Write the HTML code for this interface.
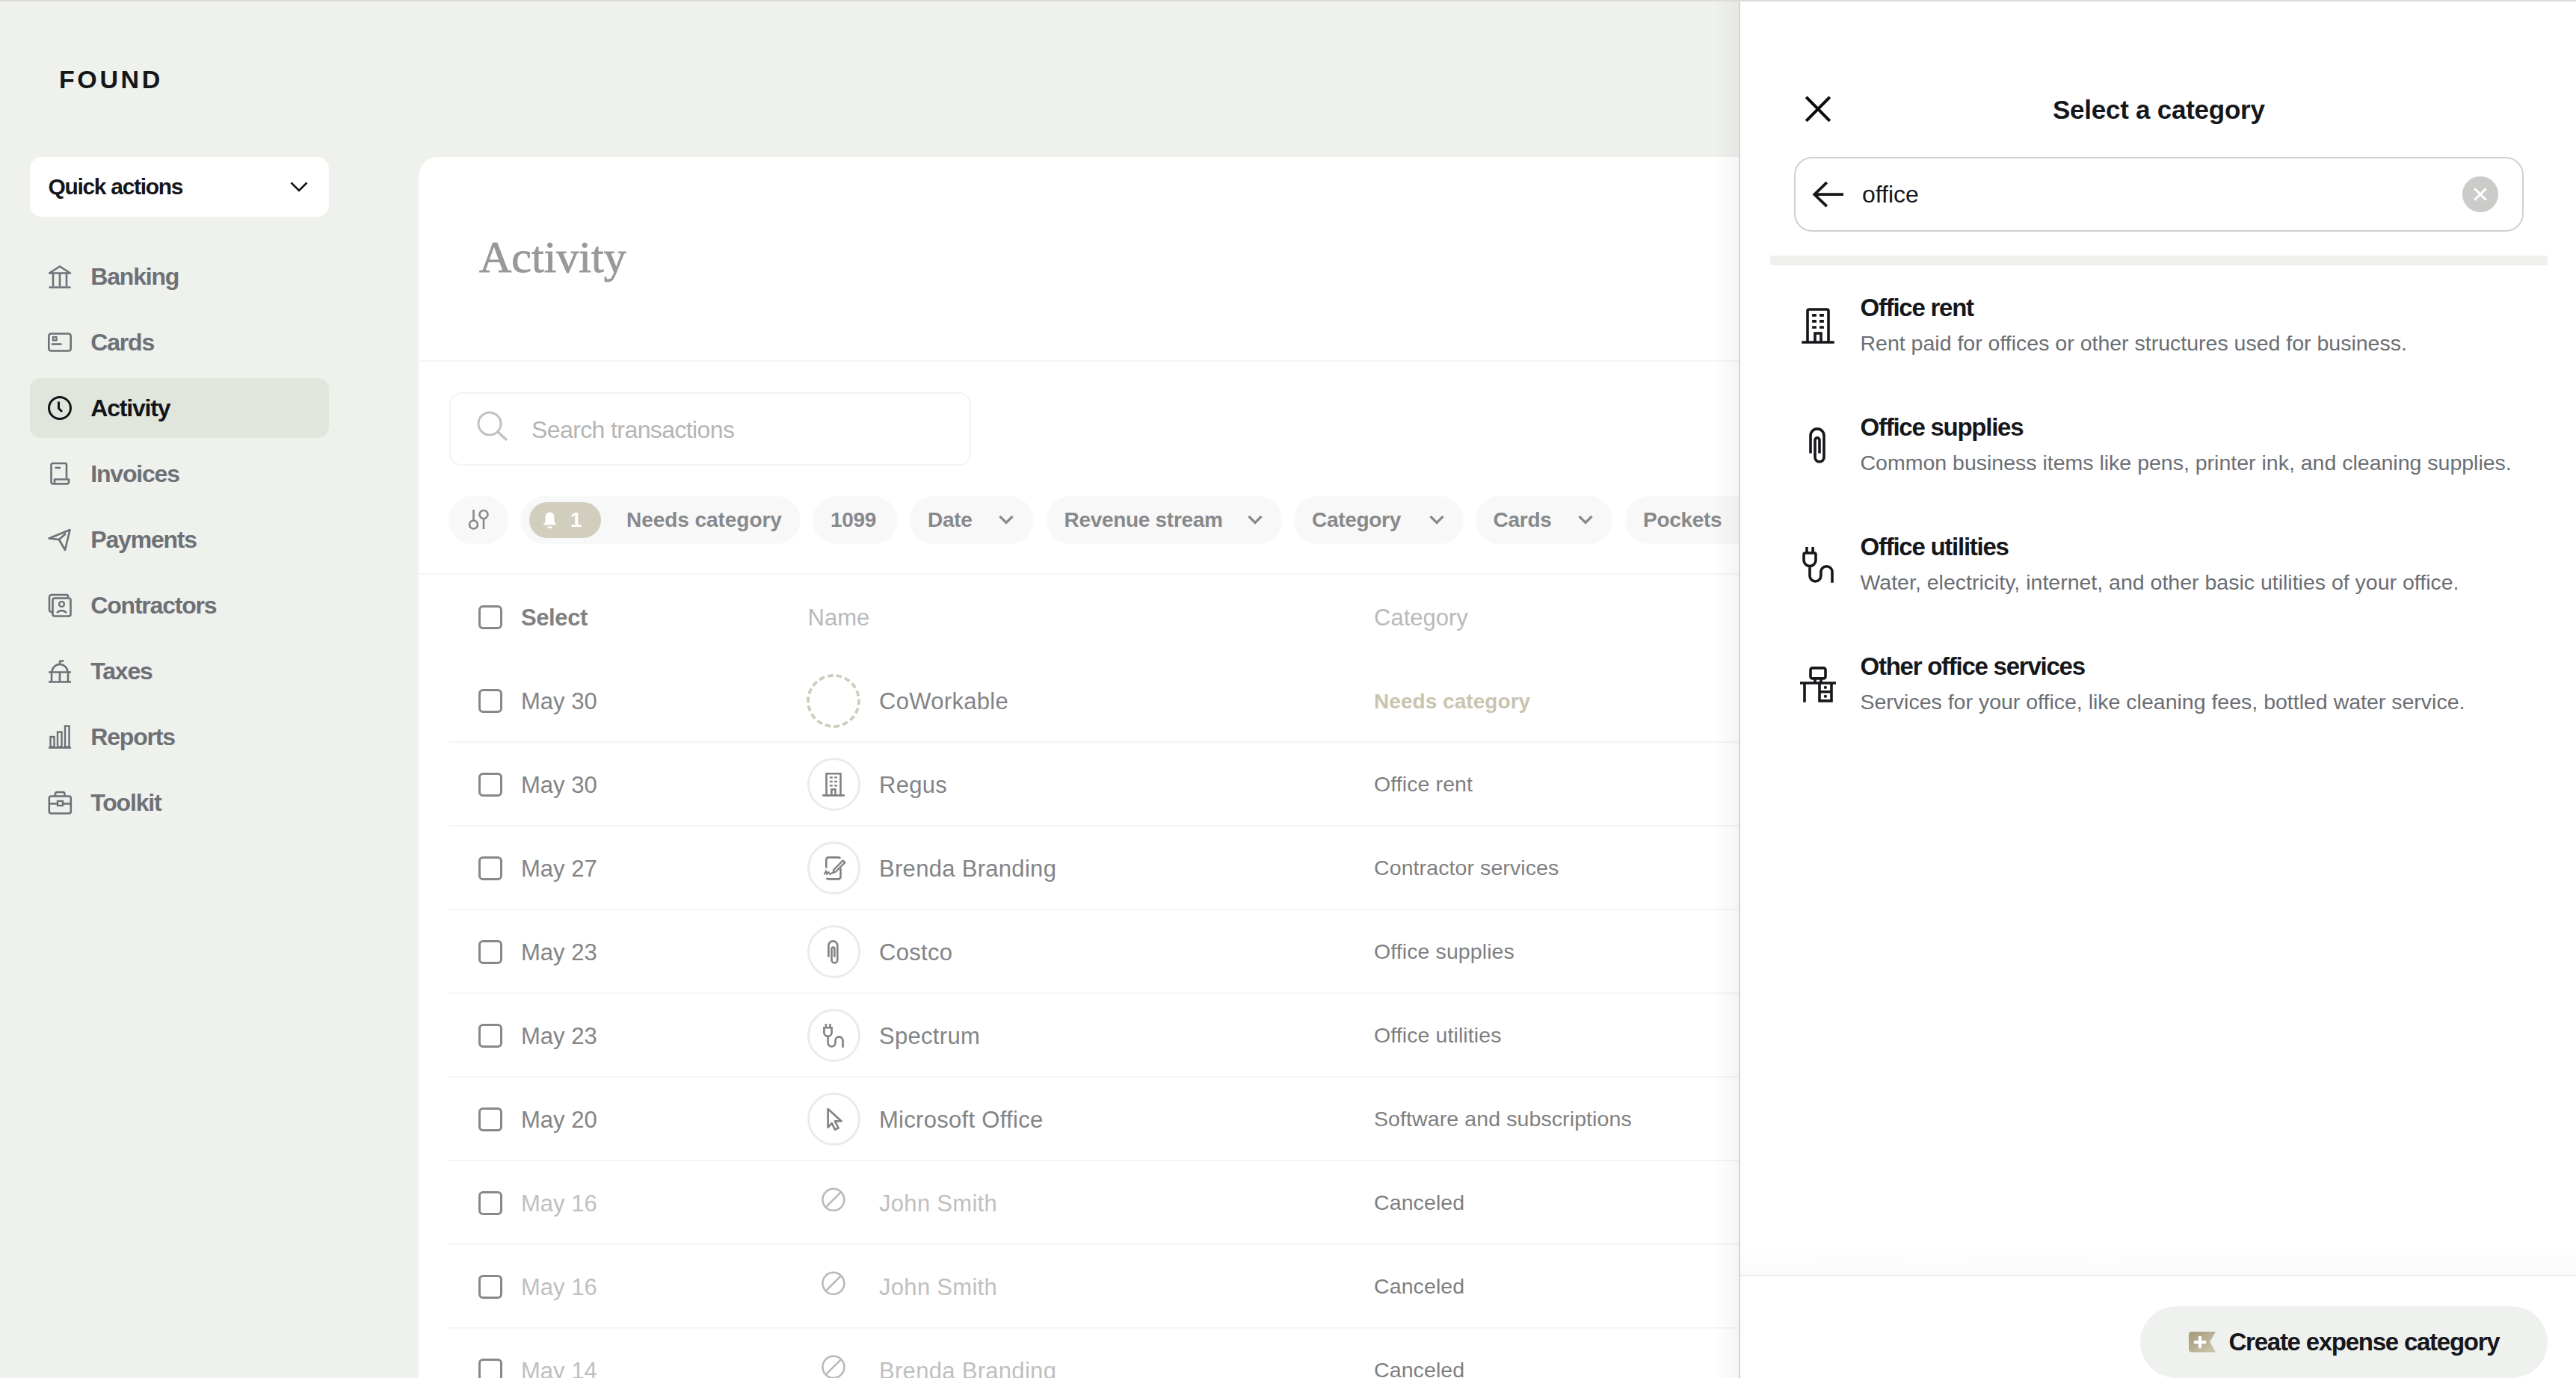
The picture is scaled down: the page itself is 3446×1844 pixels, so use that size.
<!DOCTYPE html>
<html>
<head>
<meta charset="utf-8">
<style>
html,body{margin:0;padding:0;}
body{width:3446px;height:1844px;overflow:hidden;position:relative;background:#eff1ed;font-family:"Liberation Sans",sans-serif;}
.a{position:absolute;}
.t{position:absolute;line-height:1;white-space:nowrap;}
svg{position:absolute;overflow:visible;}
</style>
</head>
<body>
<div class="a" style="left:0;top:0;width:3446px;height:2px;background:#dcdddb;z-index:50"></div>
<div class="t" style="left:79px;top:89.22px;font-size:34px;font-weight:700;letter-spacing:3.6px;color:#15161a;">FOUND</div>
<div class="a" style="left:40px;top:210px;width:400px;height:80px;background:#fff;border-radius:16px"></div>
<div class="t" style="left:64.4px;top:234.91px;font-size:30px;font-weight:700;letter-spacing:-1.3px;color:#15161a;">Quick actions</div>
<svg style="left:388px;top:243px" width="24" height="14" viewBox="0 0 24 14"><path d="M1.5 1.5 L12 12 L22.5 1.5" fill="none" stroke="#15161a" stroke-width="2.6"/></svg>
<svg style="left:64px;top:354px" width="32" height="32"><path d="M2 11.5 L16 2.5 L30 11.5 Z" fill="none" stroke="#6d7076" stroke-width="2.6" stroke-linejoin="round"/><path d="M1.5 30.5 H30.5 M7 12 V29 M16 12 V29 M25 12 V29" fill="none" stroke="#6d7076" stroke-width="2.6"/></svg>
<div class="t" style="left:121.3px;top:353.91px;font-size:32px;font-weight:700;letter-spacing:-1.2px;color:#6d7076;">Banking</div>
<svg style="left:64px;top:442px" width="32" height="32"><rect x="1.3" y="4.5" width="29.4" height="23" rx="3" fill="none" stroke="#6d7076" stroke-width="2.6"/><rect x="7" y="9" width="4.5" height="4.5" fill="none" stroke="#6d7076" stroke-width="2.2"/><path d="M5 18.5 H18.5" stroke="#6d7076" stroke-width="2.6"/></svg>
<div class="t" style="left:121.3px;top:441.91px;font-size:32px;font-weight:700;letter-spacing:-1.2px;color:#6d7076;">Cards</div>
<div class="a" style="left:40px;top:506px;width:400px;height:80px;background:#e1e6dd;border-radius:14px"></div>
<svg style="left:64px;top:530px" width="32" height="32"><circle cx="16" cy="16" r="14.5" fill="none" stroke="#131417" stroke-width="3"/><path d="M14.5 7.5 V16.5 L19 21" fill="none" stroke="#131417" stroke-width="3"/></svg>
<div class="t" style="left:121.3px;top:529.91px;font-size:32px;font-weight:700;letter-spacing:-1.2px;color:#131417;">Activity</div>
<svg style="left:64px;top:618px" width="32" height="32"><path d="M25 22 V4 a2 2 0 0 0 -2 -2 H6.5 a2 2 0 0 0 -2 2 V27 a2.5 2.5 0 0 0 2.5 2.5 H25.5 a2.5 2.5 0 0 0 2.5 -2.5 V23.5 H9 V29.5" fill="none" stroke="#6d7076" stroke-width="2.6" stroke-linejoin="round"/><path d="M9.5 8 H17" stroke="#6d7076" stroke-width="2.6"/></svg>
<div class="t" style="left:121.3px;top:617.91px;font-size:32px;font-weight:700;letter-spacing:-1.2px;color:#6d7076;">Invoices</div>
<svg style="left:64px;top:706px" width="32" height="32"><path d="M1.5 14.5 L29.5 3 L23 30 L15 16 Z M15 16 L24 8" fill="none" stroke="#6d7076" stroke-width="2.6" stroke-linejoin="round"/></svg>
<div class="t" style="left:121.3px;top:705.91px;font-size:32px;font-weight:700;letter-spacing:-1.2px;color:#6d7076;">Payments</div>
<svg style="left:64px;top:794px" width="32" height="32"><path d="M27 5.5 V4 a2 2 0 0 0 -2 -2 H5 a3 3 0 0 0 -3 3 V22 a3 3 0 0 0 3 3 H6" fill="none" stroke="#6d7076" stroke-width="2.6"/><rect x="6.5" y="6.5" width="24" height="24" rx="2.5" fill="none" stroke="#6d7076" stroke-width="2.6"/><circle cx="18.5" cy="14.5" r="3.4" fill="none" stroke="#6d7076" stroke-width="2.4"/><path d="M12 26 Q18.5 20 25 26" fill="none" stroke="#6d7076" stroke-width="2.4"/></svg>
<div class="t" style="left:121.3px;top:793.91px;font-size:32px;font-weight:700;letter-spacing:-1.2px;color:#6d7076;">Contractors</div>
<svg style="left:64px;top:882px" width="32" height="32"><path d="M1 17.5 H31 M1 30.5 H31 M5 17.5 V30 M16 17.5 V30 M27 17.5 V30 M5.5 17.5 A10.5 10.5 0 0 1 26.5 17.5 M16 2 V7 M16 2.5 H21.5" fill="none" stroke="#6d7076" stroke-width="2.6"/></svg>
<div class="t" style="left:121.3px;top:881.91px;font-size:32px;font-weight:700;letter-spacing:-1.2px;color:#6d7076;">Taxes</div>
<svg style="left:64px;top:970px" width="32" height="32"><path d="M1 30.5 H31" stroke="#6d7076" stroke-width="2.6"/><rect x="3.5" y="16" width="5" height="13.5" fill="none" stroke="#6d7076" stroke-width="2.4"/><rect x="13" y="9.5" width="5.5" height="20" fill="none" stroke="#6d7076" stroke-width="2.4"/><rect x="23" y="1.5" width="5.5" height="28" fill="none" stroke="#6d7076" stroke-width="2.4"/></svg>
<div class="t" style="left:121.3px;top:969.91px;font-size:32px;font-weight:700;letter-spacing:-1.2px;color:#6d7076;">Reports</div>
<svg style="left:64px;top:1058px" width="32" height="32"><rect x="1.8" y="7.5" width="29" height="23" rx="2.5" fill="none" stroke="#6d7076" stroke-width="2.6"/><path d="M10 7 V4.5 a2.5 2.5 0 0 1 2.5 -2.5 H20 a2.5 2.5 0 0 1 2.5 2.5 V7 M2 17.5 H13 M20 17.5 H31" fill="none" stroke="#6d7076" stroke-width="2.6"/><rect x="13" y="14" width="7" height="6" fill="none" stroke="#6d7076" stroke-width="2.4"/></svg>
<div class="t" style="left:121.3px;top:1057.91px;font-size:32px;font-weight:700;letter-spacing:-1.2px;color:#6d7076;">Toolkit</div>
<div class="a" style="left:560px;top:210px;width:1800px;height:1700px;background:#fff;border-top-left-radius:26px"></div>
<div class="t" style="left:641px;top:314.25px;font-size:60px;font-family:'Liberation Serif',serif;color:#98999b;-webkit-text-stroke:0.9px #98999b">Activity</div>
<div class="a" style="left:560px;top:482px;width:1800px;height:2px;background:#f5f5f5"></div>
<div class="a" style="left:601px;top:525px;width:698px;height:98px;border:2px solid #f3f3f3;border-radius:16px;box-sizing:border-box"></div>
<svg style="left:638px;top:550px" width="42" height="38"><circle cx="17" cy="17" r="15" fill="none" stroke="#c2c2c2" stroke-width="3"/><path d="M28 28 L40 39" stroke="#c2c2c2" stroke-width="3.4"/></svg>
<div class="t" style="left:711px;top:558.91px;font-size:32px;letter-spacing:-0.6px;color:#b5b5b5;">Search transactions</div>
<div class="a" style="left:600px;top:664px;width:80px;height:64px;background:#f8f8f8;border-radius:32px"></div>
<svg style="left:626px;top:682px" width="28" height="27"><path d="M7.5 0 V14" stroke="#88898b" stroke-width="2.6"/><circle cx="7.5" cy="20" r="5.5" fill="none" stroke="#88898b" stroke-width="2.6"/><circle cx="21" cy="6.5" r="5.5" fill="none" stroke="#88898b" stroke-width="2.6"/><path d="M21 12 V26" stroke="#88898b" stroke-width="2.6"/></svg>
<div class="a" style="left:696px;top:664px;width:375px;height:64px;background:#f8f8f8;border-radius:32px"></div>
<div class="a" style="left:708px;top:672px;width:96px;height:48px;background:#d1cebe;border-radius:24px"></div>
<svg style="left:726px;top:685px" width="19" height="23"><path d="M9.5 0.5 C4 0.5 3.5 5 3.5 9 V13.5 L0.5 17.5 H18.5 L15.5 13.5 V9 C15.5 5 15 0.5 9.5 0.5 Z" fill="#fff"/><rect x="6.5" y="19.5" width="6" height="2.5" rx="1" fill="#fff"/></svg>
<div class="t" style="left:762.7px;top:681.60px;font-size:28px;font-weight:700;color:#fff;">1</div>
<div class="t" style="left:838px;top:681.60px;font-size:28px;font-weight:700;letter-spacing:-0.05px;color:#88898b;">Needs category</div>
<div class="a" style="left:1087px;top:664px;width:113px;height:64px;background:#f8f8f8;border-radius:32px"></div>
<div class="t" style="left:1111px;top:681.60px;font-size:28px;font-weight:700;letter-spacing:-0.3px;color:#88898b;">1099</div>
<div class="a" style="left:1217px;top:664px;width:165px;height:64px;background:#f8f8f8;border-radius:32px"></div>
<div class="t" style="left:1241px;top:681.60px;font-size:28px;font-weight:700;letter-spacing:-0.3px;color:#88898b;">Date</div>
<svg style="left:1336px;top:689px" width="20" height="13"><path d="M1.5 1.8 L10 10.3 L18.5 1.8" fill="none" stroke="#88898b" stroke-width="3.3"/></svg>
<div class="a" style="left:1399.5px;top:664px;width:315.5px;height:64px;background:#f8f8f8;border-radius:32px"></div>
<div class="t" style="left:1423.5px;top:681.60px;font-size:28px;font-weight:700;letter-spacing:-0.3px;color:#88898b;">Revenue stream</div>
<svg style="left:1669px;top:689px" width="20" height="13"><path d="M1.5 1.8 L10 10.3 L18.5 1.8" fill="none" stroke="#88898b" stroke-width="3.3"/></svg>
<div class="a" style="left:1731px;top:664px;width:226.5px;height:64px;background:#f8f8f8;border-radius:32px"></div>
<div class="t" style="left:1755px;top:681.60px;font-size:28px;font-weight:700;letter-spacing:-0.3px;color:#88898b;">Category</div>
<svg style="left:1911.5px;top:689px" width="20" height="13"><path d="M1.5 1.8 L10 10.3 L18.5 1.8" fill="none" stroke="#88898b" stroke-width="3.3"/></svg>
<div class="a" style="left:1973.6px;top:664px;width:183.4000000000001px;height:64px;background:#f8f8f8;border-radius:32px"></div>
<div class="t" style="left:1997.6px;top:681.60px;font-size:28px;font-weight:700;letter-spacing:-0.3px;color:#88898b;">Cards</div>
<svg style="left:2111px;top:689px" width="20" height="13"><path d="M1.5 1.8 L10 10.3 L18.5 1.8" fill="none" stroke="#88898b" stroke-width="3.3"/></svg>
<div class="a" style="left:2174px;top:664px;width:226px;height:64px;background:#f8f8f8;border-radius:32px"></div>
<div class="t" style="left:2198px;top:681.60px;font-size:28px;font-weight:700;letter-spacing:-0.3px;color:#88898b;">Pockets</div>
<div class="a" style="left:560px;top:767px;width:1800px;height:2px;background:#f5f5f5"></div>
<div class="a" style="left:640px;top:810px;width:32px;height:32px;border:3.8px solid #87888a;border-radius:6px;box-sizing:border-box"></div>
<div class="t" style="left:697px;top:811.36px;font-size:31px;font-weight:700;letter-spacing:-0.4px;color:#7f8082;">Select</div>
<div class="t" style="left:1080.6px;top:811.36px;font-size:31px;color:#b9babb;">Name</div>
<div class="t" style="left:1838px;top:811.36px;font-size:31px;color:#b9babb;">Category</div>
<div class="a" style="left:640px;top:921.7px;width:32px;height:32px;border:3.8px solid #87888a;border-radius:6px;box-sizing:border-box"></div>
<div class="t" style="left:697px;top:923.16px;font-size:31px;color:#838486;">May 30</div>
<svg style="left:1079px;top:901.7px" width="72" height="72"><circle cx="36" cy="36" r="34" fill="none" stroke="#cfccbb" stroke-width="3.8" stroke-dasharray="7.6 4.27" transform="rotate(-84 36 36)"/></svg>

<div class="t" style="left:1176px;top:923.16px;font-size:31px;letter-spacing:0.3px;color:#838486;">CoWorkable</div>
<div class="t" style="left:1838px;top:924.70px;font-size:28px;font-weight:700;letter-spacing:0.05px;color:#c8c4af;">Needs category</div>
<div class="a" style="left:600px;top:992px;width:1760px;height:2px;background:#f5f5f5"></div>
<div class="a" style="left:640px;top:1033.7px;width:32px;height:32px;border:3.8px solid #87888a;border-radius:6px;box-sizing:border-box"></div>
<div class="t" style="left:697px;top:1035.16px;font-size:31px;color:#838486;">May 30</div>
<div class="a" style="left:1079.5px;top:1014.2px;width:71px;height:71px;border:3px solid #e9ece9;border-radius:50%;box-sizing:border-box"></div>
<svg style="left:1075px;top:1009.7px" width="80" height="80"><path d="M25.1 54.4 H54.9 M30.5 54 V25.3 H49.5 V54 M37.4 54 V46.4 H42.5 V54" fill="none" stroke="#808183" stroke-width="2.6"/><path d="M34.8 30.4 H38.8 M41.2 30.4 H45 M34.8 35.9 H38.8 M41.2 35.9 H45 M34.8 41.3 H38.8 M41.2 41.3 H45" stroke="#808183" stroke-width="2.4"/></svg>
<div class="t" style="left:1176px;top:1035.16px;font-size:31px;letter-spacing:0.3px;color:#838486;">Regus</div>
<div class="t" style="left:1838px;top:1034.67px;font-size:28.5px;letter-spacing:0.1px;color:#7e7f81;">Office rent</div>
<div class="a" style="left:600px;top:1104px;width:1760px;height:2px;background:#f5f5f5"></div>
<div class="a" style="left:640px;top:1145.7px;width:32px;height:32px;border:3.8px solid #87888a;border-radius:6px;box-sizing:border-box"></div>
<div class="t" style="left:697px;top:1147.16px;font-size:31px;color:#838486;">May 27</div>
<div class="a" style="left:1079.5px;top:1126.2px;width:71px;height:71px;border:3px solid #e9ece9;border-radius:50%;box-sizing:border-box"></div>
<svg style="left:1075px;top:1121.7px" width="80" height="80"><path d="M30.3 39.5 V28.4 a3 3 0 0 1 3 -3 H46.5 a3 3 0 0 1 2.6 1.5 M49.5 39.5 V51.4 a3 3 0 0 1 -3 3 H33.3 a3 3 0 0 1 -2.6 -1.6" fill="none" stroke="#808183" stroke-width="2.6"/><path d="M39.6 46 L40.3 41.8 L52.6 29.5 L55.3 32.2 L43 44.5 Z" fill="none" stroke="#808183" stroke-width="2.4" stroke-linejoin="round"/><path d="M27.6 48.5 L29.8 43.8 L31.2 47.6 L33.2 45 L35.4 48 L37.6 46.2 L40 46" fill="none" stroke="#808183" stroke-width="2"/></svg>
<div class="t" style="left:1176px;top:1147.16px;font-size:31px;letter-spacing:0.3px;color:#838486;">Brenda Branding</div>
<div class="t" style="left:1838px;top:1146.67px;font-size:28.5px;letter-spacing:0.1px;color:#7e7f81;">Contractor services</div>
<div class="a" style="left:600px;top:1216px;width:1760px;height:2px;background:#f5f5f5"></div>
<div class="a" style="left:640px;top:1257.7px;width:32px;height:32px;border:3.8px solid #87888a;border-radius:6px;box-sizing:border-box"></div>
<div class="t" style="left:697px;top:1259.16px;font-size:31px;color:#838486;">May 23</div>
<div class="a" style="left:1079.5px;top:1238.2px;width:71px;height:71px;border:3px solid #e9ece9;border-radius:50%;box-sizing:border-box"></div>
<svg style="left:1075px;top:1233.7px" width="80" height="80"><path d="M33.4 46.7 V31.35 A5.95 5.95 0 0 1 45.3 31.35 V50.5 A3.9 3.9 0 0 1 37.5 50.5 V35.45 A1.95 1.95 0 0 1 41.4 35.45 V46.7" fill="none" stroke="#808183" stroke-width="2.6"/></svg>
<div class="t" style="left:1176px;top:1259.16px;font-size:31px;letter-spacing:0.3px;color:#838486;">Costco</div>
<div class="t" style="left:1838px;top:1258.67px;font-size:28.5px;letter-spacing:0.1px;color:#7e7f81;">Office supplies</div>
<div class="a" style="left:600px;top:1328px;width:1760px;height:2px;background:#f5f5f5"></div>
<div class="a" style="left:640px;top:1369.7px;width:32px;height:32px;border:3.8px solid #87888a;border-radius:6px;box-sizing:border-box"></div>
<div class="t" style="left:697px;top:1371.16px;font-size:31px;color:#838486;">May 23</div>
<div class="a" style="left:1079.5px;top:1350.2px;width:71px;height:71px;border:3px solid #e9ece9;border-radius:50%;box-sizing:border-box"></div>
<svg style="left:1075px;top:1345.7px" width="80" height="80"><path d="M29.9 24.1 V29 M35.5 24.1 V29 M27.4 29.3 H37.6 V35.8 A5.1 5.1 0 0 1 27.4 35.8 Z M32.6 41 V49.6 A4.95 4.95 0 0 0 42.5 49.6 V46.4 A5 5 0 0 1 52.5 46.4 V55.7" fill="none" stroke="#808183" stroke-width="2.6"/></svg>
<div class="t" style="left:1176px;top:1371.16px;font-size:31px;letter-spacing:0.3px;color:#838486;">Spectrum</div>
<div class="t" style="left:1838px;top:1370.67px;font-size:28.5px;letter-spacing:0.1px;color:#7e7f81;">Office utilities</div>
<div class="a" style="left:600px;top:1440px;width:1760px;height:2px;background:#f5f5f5"></div>
<div class="a" style="left:640px;top:1481.7px;width:32px;height:32px;border:3.8px solid #87888a;border-radius:6px;box-sizing:border-box"></div>
<div class="t" style="left:697px;top:1483.16px;font-size:31px;color:#838486;">May 20</div>
<div class="a" style="left:1079.5px;top:1462.2px;width:71px;height:71px;border:3px solid #e9ece9;border-radius:50%;box-sizing:border-box"></div>
<svg style="left:1075px;top:1457.7px" width="80" height="80"><path d="M32.6 26 L50.5 42.3 L42 42.3 L46.6 51.5 L42 53.7 L37.9 45 L32.6 50.5 Z" fill="none" stroke="#808183" stroke-width="2.6" stroke-linejoin="round"/></svg>
<div class="t" style="left:1176px;top:1483.16px;font-size:31px;letter-spacing:0.3px;color:#838486;">Microsoft Office</div>
<div class="t" style="left:1838px;top:1482.67px;font-size:28.5px;letter-spacing:0.1px;color:#7e7f81;">Software and subscriptions</div>
<div class="a" style="left:600px;top:1552px;width:1760px;height:2px;background:#f5f5f5"></div>
<div class="a" style="left:640px;top:1593.7px;width:32px;height:32px;border:3.8px solid #87888a;border-radius:6px;box-sizing:border-box"></div>
<div class="t" style="left:697px;top:1595.16px;font-size:31px;color:#bfbfc0;">May 16</div>
<svg style="left:1075px;top:1569.7px" width="80" height="80"><circle cx="39.9" cy="35.3" r="14.5" fill="none" stroke="#b8b9ba" stroke-width="2.6"/><path d="M30 45.2 L49.8 25.4" stroke="#b8b9ba" stroke-width="2.6"/></svg>
<div class="t" style="left:1176px;top:1595.16px;font-size:31px;letter-spacing:0.3px;color:#bfbfc0;">John Smith</div>
<div class="t" style="left:1838px;top:1594.67px;font-size:28.5px;letter-spacing:0.1px;color:#7e7f81;">Canceled</div>
<div class="a" style="left:600px;top:1664px;width:1760px;height:2px;background:#f5f5f5"></div>
<div class="a" style="left:640px;top:1705.7px;width:32px;height:32px;border:3.8px solid #87888a;border-radius:6px;box-sizing:border-box"></div>
<div class="t" style="left:697px;top:1707.16px;font-size:31px;color:#bfbfc0;">May 16</div>
<svg style="left:1075px;top:1681.7px" width="80" height="80"><circle cx="39.9" cy="35.3" r="14.5" fill="none" stroke="#b8b9ba" stroke-width="2.6"/><path d="M30 45.2 L49.8 25.4" stroke="#b8b9ba" stroke-width="2.6"/></svg>
<div class="t" style="left:1176px;top:1707.16px;font-size:31px;letter-spacing:0.3px;color:#bfbfc0;">John Smith</div>
<div class="t" style="left:1838px;top:1706.67px;font-size:28.5px;letter-spacing:0.1px;color:#7e7f81;">Canceled</div>
<div class="a" style="left:600px;top:1776px;width:1760px;height:2px;background:#f5f5f5"></div>
<div class="a" style="left:640px;top:1817.7px;width:32px;height:32px;border:3.8px solid #87888a;border-radius:6px;box-sizing:border-box"></div>
<div class="t" style="left:697px;top:1819.16px;font-size:31px;color:#bfbfc0;">May 14</div>
<svg style="left:1075px;top:1793.7px" width="80" height="80"><circle cx="39.9" cy="35.3" r="14.5" fill="none" stroke="#b8b9ba" stroke-width="2.6"/><path d="M30 45.2 L49.8 25.4" stroke="#b8b9ba" stroke-width="2.6"/></svg>
<div class="t" style="left:1176px;top:1819.16px;font-size:31px;letter-spacing:0.3px;color:#bfbfc0;">Brenda Branding</div>
<div class="t" style="left:1838px;top:1818.67px;font-size:28.5px;letter-spacing:0.1px;color:#7e7f81;">Canceled</div>
<div class="a" style="left:2292px;top:0;width:34px;height:1844px;background:linear-gradient(to right,rgba(0,0,0,0),rgba(0,0,0,0.04))"></div>
<div class="a" style="left:2326px;top:0;width:1120px;height:1844px;background:#fff;border-left:2px solid #d4d4d4;box-sizing:border-box"></div>
<svg style="left:2414px;top:128px" width="36" height="36"><path d="M2.2 1.9 L33.8 33.9 M33.8 1.9 L2.2 33.9" stroke="#0c0c0e" stroke-width="4.1"/></svg>
<div class="t" style="left:2746px;top:129.37px;font-size:35px;font-weight:700;letter-spacing:-0.25px;color:#16171b;">Select a category</div>
<div class="a" style="left:2400px;top:210px;width:976px;height:100px;border:2px solid #d0d0d0;border-radius:24px;box-sizing:border-box"></div>
<svg style="left:2425px;top:243px" width="42" height="35"><path d="M18.8 1.2 L2.2 17.2 L18.8 33.2 M2.5 17.2 H41" fill="none" stroke="#16171b" stroke-width="3.7"/></svg>
<div class="t" style="left:2491px;top:244.11px;font-size:32px;color:#16171b;">office</div>
<div class="a" style="left:3294px;top:236px;width:48px;height:48px;background:#cbccc9;border-radius:50%"></div>
<svg style="left:3309px;top:251px" width="18" height="18"><path d="M1.2 1.2 L16.8 16.8 M16.8 1.2 L1.2 16.8" stroke="#fff" stroke-width="3"/></svg>
<div class="a" style="left:2368px;top:342px;width:1040px;height:13px;background:#eff0ee"></div>
<svg style="left:2400px;top:400px" width="70" height="70"><path d="M10.2 58 H53.8 M18 57 V16 a2 2 0 0 1 2 -2 H44 a2 2 0 0 1 2 2 V57 M28 57 V46 H36 V57" fill="none" stroke="#16171b" stroke-width="3.6"/><path d="M24.1 21.9 H29.9 M34 21.9 H39.9 M24.1 29.9 H29.9 M34 29.9 H39.9 M24.1 38 H29.9 M34 38 H39.9" stroke="#16171b" stroke-width="3.7"/></svg>
<div class="t" style="left:2488.5px;top:395.37px;font-size:33px;font-weight:700;letter-spacing:-1.25px;color:#16171b;">Office rent</div>
<div class="t" style="left:2488.5px;top:445.27px;font-size:28.5px;color:#6b6e73;">Rent paid for offices or other structures used for business.</div>
<svg style="left:2400px;top:560px" width="70" height="70"><path d="M22 46.6 V22.9 A9 9 0 0 1 40 22.9 V52 A6 6 0 0 1 28 52 V28.9 A3 3 0 0 1 34 28.9 V46.6" fill="none" stroke="#16171b" stroke-width="3.6"/></svg>
<div class="t" style="left:2488.5px;top:555.37px;font-size:33px;font-weight:700;letter-spacing:-1.25px;color:#16171b;">Office supplies</div>
<div class="t" style="left:2488.5px;top:605.27px;font-size:28.5px;color:#6b6e73;">Common business items like pens, printer ink, and cleaning supplies.</div>
<svg style="left:2400px;top:720px" width="70" height="70"><path d="M17 12 V19 M25.1 12 V19" stroke="#16171b" stroke-width="3.6"/><path d="M13 29.5 V22 a2 2 0 0 1 2 -2 H27 a2 2 0 0 1 2 2 V29.5 A8 8 0 0 1 13 29.5 Z M21 37.5 V50.5 A7.45 7.45 0 0 0 35.9 50.5 V45.35 A7.55 7.55 0 0 1 51 45.35 V59.7" fill="none" stroke="#16171b" stroke-width="3.6"/></svg>
<div class="t" style="left:2488.5px;top:715.37px;font-size:33px;font-weight:700;letter-spacing:-1.25px;color:#16171b;">Office utilities</div>
<div class="t" style="left:2488.5px;top:765.27px;font-size:28.5px;color:#6b6e73;">Water, electricity, internet, and other basic utilities of your office.</div>
<svg style="left:2400px;top:880px" width="70" height="70"><rect x="22" y="13.9" width="20" height="14" rx="2.5" fill="none" stroke="#16171b" stroke-width="3.6"/><path d="M28 28 V34 M36 28 V34 M8 34 H56 M14 34 V59.7 M34 34 V57.9 H50 V34 M34 45.8 H50" fill="none" stroke="#16171b" stroke-width="3.6"/><circle cx="41.9" cy="39.9" r="2.1" fill="#16171b"/><circle cx="41.9" cy="51.8" r="2.1" fill="#16171b"/></svg>
<div class="t" style="left:2488.5px;top:875.37px;font-size:33px;font-weight:700;letter-spacing:-1.25px;color:#16171b;">Other office services</div>
<div class="t" style="left:2488.5px;top:925.27px;font-size:28.5px;color:#6b6e73;">Services for your office, like cleaning fees, bottled water service.</div>
<div class="a" style="left:2328px;top:1670px;width:1118px;height:37px;background:linear-gradient(to bottom,rgba(0,0,0,0),rgba(0,0,0,0.02))"></div>
<div class="a" style="left:2328px;top:1706px;width:1118px;height:2px;background:#ebebeb"></div>
<div class="a" style="left:2863px;top:1748px;width:545px;height:96px;background:#eff1ee;border-radius:48px"></div>
<svg style="left:2928px;top:1782px" width="38" height="28"><defs><linearGradient id="gg" x1="0" y1="0" x2="1" y2="1"><stop offset="0" stop-color="#a39a79"/><stop offset="1" stop-color="#cdc7ad"/></linearGradient></defs><path d="M4 0 H36 L28.2 13.6 L36 27.4 H4 a4 4 0 0 1 -4 -4 V4 a4 4 0 0 1 4 -4 Z" fill="url(#gg)"/><path d="M15 6 V22.2 M6.9 14 H23" stroke="#fff" stroke-width="4"/></svg>
<div class="t" style="left:2981.5px;top:1779.37px;font-size:33px;font-weight:700;letter-spacing:-1.25px;color:#16171b;">Create expense category</div>
</body>
</html>
